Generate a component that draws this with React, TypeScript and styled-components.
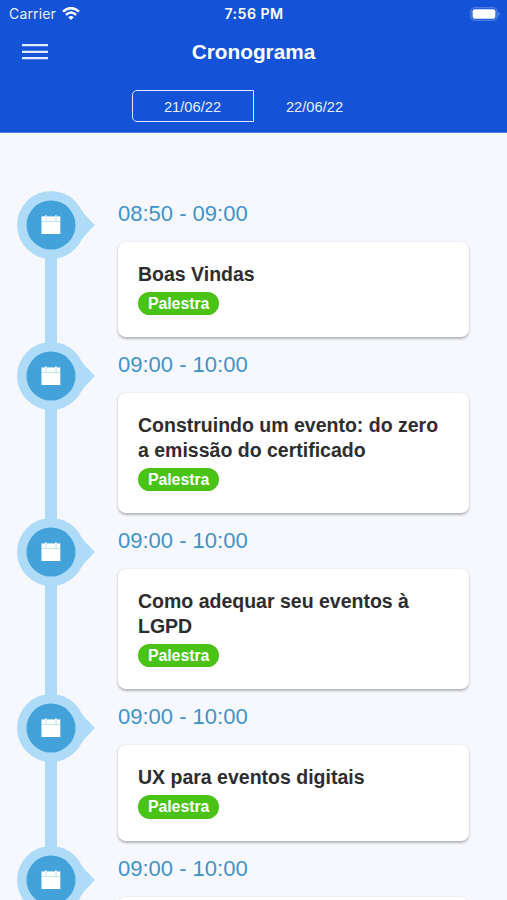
import React from "react";
import styled, { createGlobalStyle } from "styled-components";

const GlobalStyle = createGlobalStyle`
  *, *::before, *::after { box-sizing: border-box; }
  body {
    margin: 0;
    background: #f7f8fe;
    font-family: "Liberation Sans", Arial, sans-serif;
  }
`;

const Screen = styled.div`
  height: 900px;
  overflow: hidden;
  background: #f7f8fe;
`;

const Header = styled.header`
  height: 133px;
  background: #1453d8;
  border-bottom: 1px solid #4a7ce3;
  color: #fff;
`;

const StatusBar = styled.div`
  display: grid;
  grid-template-columns: 1fr auto 1fr;
  align-items: center;
  height: 27px;
  padding: 0 6px 0 9px;
  font-family: Inter, sans-serif;
  font-size: 14px;
  line-height: 27px;
`;

const Carrier = styled.div`
  display: flex;
  align-items: center;
  gap: 6px;
  color: #e8effc;
  letter-spacing: 0.15px;
`;

const Clock = styled.div`
  margin-left: -2px;
  font-size: 14.2px;
  font-weight: 600;
  letter-spacing: 0.45px;
`;

const BatterySlot = styled.div`
  display: flex;
  justify-content: flex-end;
`;

const TitleBar = styled.div`
  display: grid;
  grid-template-columns: 1fr auto 1fr;
  align-items: center;
  height: 50px;
  padding: 0 22px;
`;

const MenuIcon = styled.svg`
  display: block;
`;

const Title = styled.h1`
  margin: 0;
  font-size: 20.8px;
  line-height: 26px;
`;

const Dates = styled.div`
  display: flex;
  justify-content: center;
  margin-top: 13px;
`;

const DateTab = styled.button<{ $active?: boolean }>`
  width: 122px;
  height: 32px;
  padding: 1px 0 0;
  border: 1.5px solid ${(p) => (p.$active ? "#dfe8fb" : "transparent")};
  border-radius: 5px 0 0 5px;
  background: none;
  color: #e6edfc;
  font-family: inherit;
  font-size: 14.7px;
`;

const Timeline = styled.main`
  display: flex;
  flex-direction: column;
  padding: 57.5px 38px 0 17px;
`;

const Row = styled.article`
  display: grid;
  grid-template-columns: 78px 351px;
  column-gap: 23px;
`;

const Rail = styled.div`
  display: flex;
  flex-direction: column;
`;

const Marker = styled.svg`
  display: block;
  flex: none;
`;

const Connector = styled.div`
  flex: 1;
  width: 12px;
  margin: -2px 0 -2px 28px;
  background: #aedcf8;
`;

const Time = styled.div`
  height: 51.1px;
  padding-top: 10.4px;
  color: #3e93ca;
  font-size: 22px;
  line-height: 26px;
`;

const Card = styled.div`
  min-height: 95.4px;
  margin-bottom: 5.1px;
  padding: 20px 20px 21.8px;
  border-radius: 8px;
  background: #fff;
  box-shadow: 0 1.5px 2.5px rgba(0, 0, 0, 0.28);
`;

const EventTitle = styled.h2`
  margin: 0;
  color: #2d2d2f;
  font-size: 19.5px;
  line-height: 24.4px;
  white-space: pre-line;
`;

const Badge = styled.span`
  display: block;
  width: 81.3px;
  height: 23.4px;
  margin-top: 5.8px;
  border-radius: 12px;
  background: #49c316;
  color: #fff;
  font-size: 15.8px;
  font-weight: 700;
  line-height: 23.4px;
  text-align: center;
`;

type TimelineEvent = { time: string; title?: string };

const events: TimelineEvent[] = [
  { time: "08:50 - 09:00", title: "Boas Vindas" },
  { time: "09:00 - 10:00", title: "Construindo um evento: do zero\na emissão do certificado" },
  { time: "09:00 - 10:00", title: "Como adequar seu eventos à\nLGPD" },
  { time: "09:00 - 10:00", title: "UX para eventos digitais" },
  { time: "09:00 - 10:00" },
];

const WifiIcon = () => (
  <svg width="18" height="14" viewBox="0 0 18 14" fill="none">
    <path d="M1 4.6Q9-2.4 17 4.6" stroke="#fff" strokeWidth="2.5" />
    <path d="M3.9 7.9Q9 3.2 14.1 7.9" stroke="#fff" strokeWidth="2.4" />
    <path d="M6.2 10.3Q9 7.6 11.8 10.3L9 13Z" fill="#fff" />
  </svg>
);

const BatteryIcon = () => (
  <svg width="31" height="14" viewBox="0 0 31 14">
    <rect x="0.9" y="0.7" width="26.2" height="12.6" rx="3.8" fill="none" stroke="#5f8be6" strokeWidth="1.1" />
    <rect x="2.6" y="2.3" width="22.8" height="9.4" rx="2" fill="#fff" />
    <path d="M28.5 4.7Q30.5 7 28.5 9.3Z" fill="#7ca1eb" />
  </svg>
);

const EventMarker = () => (
  <Marker width="78" height="68" viewBox="0 0 78 68">
    <path d="M61 14C65 21 70 26 78 34C70 42 66 46 61 54Z" fill="#aedcf8" />
    <circle cx="34" cy="34" r="34" fill="#aedcf8" />
    <circle cx="34" cy="34" r="24.5" fill="#43a2da" />
    <path d="M24.5 25.4H43.3V43H24.5Z" fill="#fff" />
    <path d="M24.5 30.5H43.3" stroke="#b5dbf2" strokeWidth="0.8" />
    <path d="M28.9 24.5V29.6M38.9 24.5V29.6" stroke="#a9d5ef" strokeWidth="1.6" />
    <path d="M28.9 24.2V29.2M38.9 24.2V29.2" stroke="#fff" strokeWidth="1" />
  </Marker>
);

export default function App() {
  return (
    <>
      <GlobalStyle />
      <Screen>
        <Header>
          <StatusBar>
            <Carrier>Carrier <WifiIcon /></Carrier>
            <Clock>7:56 PM</Clock>
            <BatterySlot><BatteryIcon /></BatterySlot>
          </StatusBar>
          <TitleBar>
            <MenuIcon width="26" height="18" viewBox="0 0 26 18" aria-label="Menu">
              <path d="M0 2.2H26M0 8.8H26M0 15.2H26" stroke="#e3ebfb" strokeWidth="2.3" />
            </MenuIcon>
            <Title>Cronograma</Title>
          </TitleBar>
          <Dates>
            <DateTab $active>21/06/22</DateTab>
            <DateTab>22/06/22</DateTab>
          </Dates>
        </Header>
        <Timeline>
          {events.map((event, i) => (
            <Row key={i}>
              <Rail>
                <EventMarker />
                <Connector />
              </Rail>
              <div>
                <Time>{event.time}</Time>
                <Card>
                  {event.title && (
                    <>
                      <EventTitle>{event.title}</EventTitle>
                      <Badge>Palestra</Badge>
                    </>
                  )}
                </Card>
              </div>
            </Row>
          ))}
        </Timeline>
      </Screen>
    </>
  );
}
